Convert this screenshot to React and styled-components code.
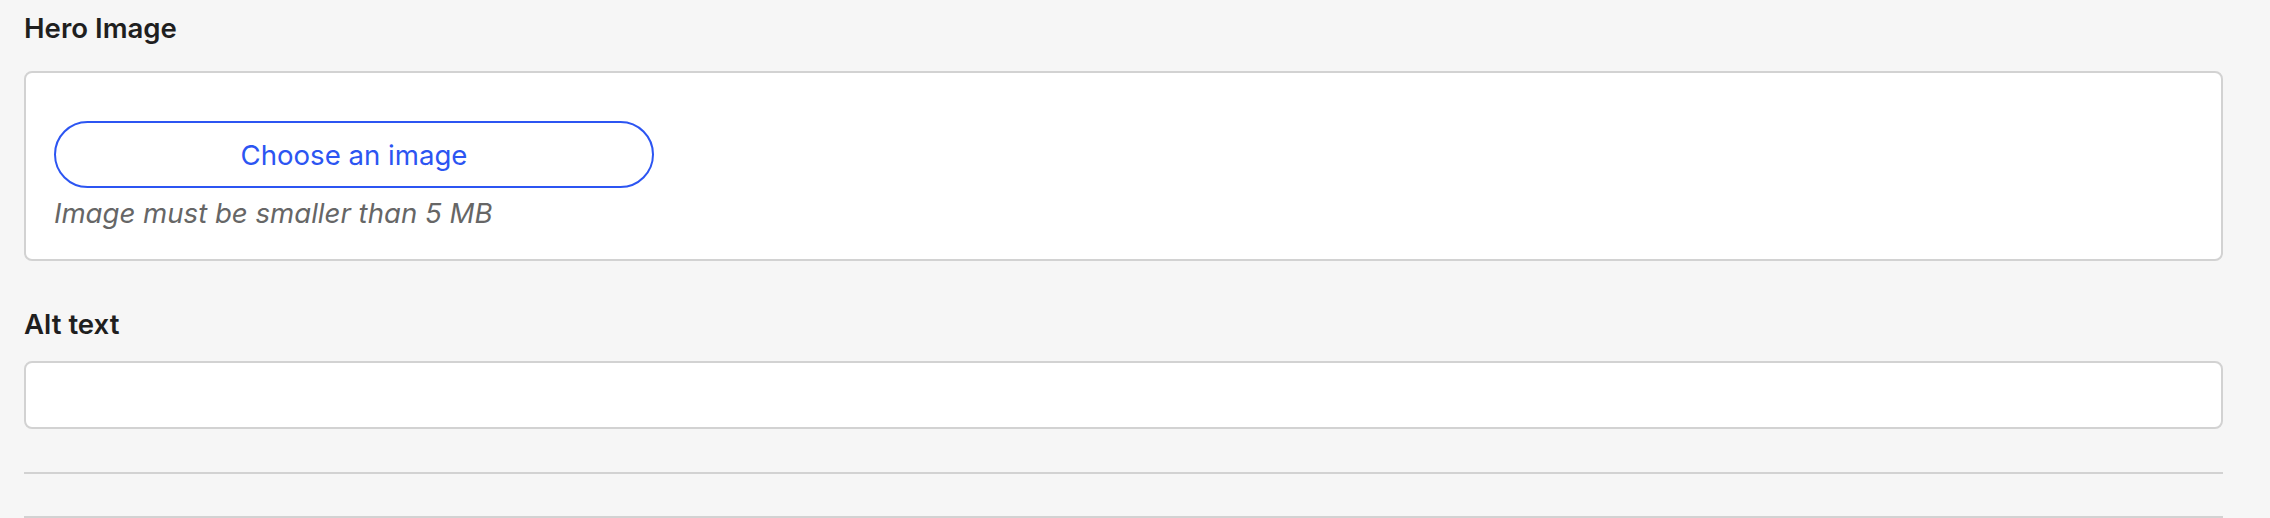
import React from "react";
import styled, { createGlobalStyle } from "styled-components";

const GlobalStyle = createGlobalStyle`
  html, body {
    margin: 0;
    padding: 0;
    background: #f6f6f6;
  }
  body {
    font-family: Inter, "Noto Sans", "Liberation Sans", sans-serif;
    color: #1f1f1f;
  }
  * { box-sizing: border-box; }
`;

const Page = styled.main`
  width: 2223px;
  padding: 11px 0 0 24px;
  display: flex;
  flex-direction: column;
`;

const Label = styled.label`
  display: block;
  font-size: 27.6px;
  line-height: 34px;
  font-weight: 600;
  color: #1f1f1f;
  margin: ${(p) => p.$top || 0}px 0 ${(p) => p.$bottom || 0}px;
`;

const Panel = styled.section`
  background: #ffffff;
  border: 2px solid #d2d2d2;
  border-radius: 8px;
  padding: 48px 28px 29px;
  display: flex;
  flex-direction: column;
  align-items: flex-start;
`;

const ChooseButton = styled.button`
  width: 600px;
  height: 67px;
  border: 2px solid #2c55f2;
  border-radius: 34px;
  background: #ffffff;
  color: #2c55f2;
  font-family: Inter, "Noto Sans", sans-serif;
  font-size: 27.6px;
  font-weight: 400;
  cursor: pointer;
  padding: 0;
`;

const Hint = styled.p`
  margin: 8px 0 0;
  font-size: 27.6px;
  line-height: 34px;
  font-style: italic;
  color: #666666;
`;

const TextInput = styled.input`
  display: block;
  width: 100%;
  height: 68px;
  background: #ffffff;
  border: 2px solid #d2d2d2;
  border-radius: 8px;
  padding: 0 20px;
  font-family: Inter, sans-serif;
  font-size: 27.6px;
  outline: none;
`;

const Rule = styled.hr`
  width: 100%;
  height: 2px;
  border: 0;
  background: #d2d2d2;
  margin: ${(p) => p.$top}px 0 0;
`;

export default function App() {
  return (
    <>
      <GlobalStyle />
      <Page>
        <Label $bottom={26}>Hero Image</Label>
        <Panel>
          <ChooseButton type="button">Choose an image</ChooseButton>
          <Hint>Image must be smaller than 5 MB</Hint>
        </Panel>
        <Label $top={46} $bottom={20} htmlFor="alt">Alt text</Label>
        <TextInput id="alt" type="text" />
        <Rule $top={43} />
        <Rule $top={42} />
      </Page>
    </>
  );
}
